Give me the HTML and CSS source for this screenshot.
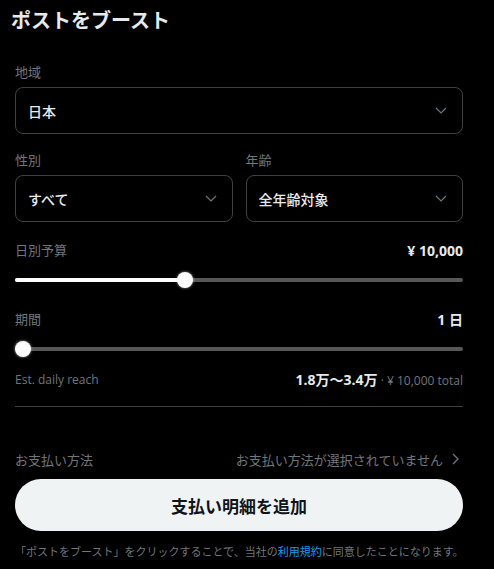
FILE: index.html
```html
<!DOCTYPE html>
<html lang="ja">
<head>
<meta charset="utf-8">
<link rel="stylesheet" href="styles.css">
</head>
<body>
<div class="page">
  <h1 class="title">ポストをブースト</h1>

  <div class="field">
    <div class="label">地域</div>
    <div class="select"><span>日本</span><svg class="chev" viewBox="0 0 12 7" width="12" height="7"><path d="M1 1l5 5 5-5" fill="none" stroke="#71767b" stroke-width="1.2"/></svg></div>
  </div>

  <div class="row">
    <div class="field">
      <div class="label">性別</div>
      <div class="select"><span>すべて</span><svg class="chev" viewBox="0 0 12 7" width="12" height="7"><path d="M1 1l5 5 5-5" fill="none" stroke="#71767b" stroke-width="1.2"/></svg></div>
    </div>
    <div class="field">
      <div class="label">年齢</div>
      <div class="select"><span>全年齢対象</span><svg class="chev" viewBox="0 0 12 7" width="12" height="7"><path d="M1 1l5 5 5-5" fill="none" stroke="#71767b" stroke-width="1.2"/></svg></div>
    </div>
  </div>

  <div class="head head-budget">
    <span class="label">日別予算</span>
    <span class="value">¥ 10,000</span>
  </div>
  <div class="slider">
    <div class="track"><div class="fill" style="width: 38%"></div></div>
    <div class="thumb thumb-mid" style="left: 38%"></div>
  </div>

  <div class="head head-period">
    <span class="label">期間</span>
    <span class="value">1 日</span>
  </div>
  <div class="slider">
    <div class="track"><div class="fill" style="width: 0%"></div></div>
    <div class="thumb" style="left: 0%"></div>
  </div>

  <div class="reach">
    <span class="reach-label">Est. daily reach</span>
    <span class="reach-value"><b>1.8万〜3.4万</b> · ¥ 10,000 total</span>
  </div>

  <div class="divider"></div>

  <div class="pay">
    <span>お支払い方法</span>
    <span class="pay-right">お支払い方法が選択されていません<svg viewBox="0 0 7 12" width="7" height="12"><path d="M1 1l5 5-5 5" fill="none" stroke="#71767b" stroke-width="1.3"/></svg></span>
  </div>

  <button class="btn">支払い明細を追加</button>

  <p class="terms">「ポストをブースト」をクリックすることで、当社の<a href="#">利用規約</a>に同意したことになります。</p>
</div>
</body>
</html>
```

FILE: styles.css
```css
* { box-sizing: border-box; }
html, body {
  margin: 0;
  padding: 0;
  background: #000;
}
body {
  font-family: "Open Sans", "Noto Sans CJK JP", sans-serif;
  color: #e7e9ea;
}
.page {
  width: 494px;
  height: 569px;
  padding: 0 31px 0 15px;
  overflow: hidden;
}
.title {
  margin: 0 0 22px -4px;
  height: 40px;
  line-height: 40px;
  font-size: 20px;
  font-weight: 700;
  font-family: "Noto Sans CJK JP", sans-serif;
  color: #e7e9ea;
}
.label {
  font-size: 13px;
  line-height: 20px;
  height: 20px;
  color: #71767b;
  font-family: "Noto Sans CJK JP", sans-serif;
}
.field .label { margin-bottom: 5px; }
.select {
  height: 47px;
  border: 1px solid #3e4144;
  border-radius: 8px;
  padding: 0 15px 0 12px;
  display: flex;
  align-items: center;
  justify-content: space-between;
  font-size: 14px;
  font-weight: 500;
  font-family: "Noto Sans CJK JP", sans-serif;
  color: #e7e9ea;
}
.chev { display: block; }
.row {
  margin-top: 16px;
  display: grid;
  grid-template-columns: 1fr 1fr;
  gap: 13px;
}
.row .field .label { margin-bottom: 5px; }
.head {
  display: flex;
  justify-content: space-between;
  align-items: center;
  height: 20px;
}
.head-budget { margin-top: 18px; }
.head-period { margin-top: 19px; }
.value {
  font-size: 14px;
  font-weight: 700;
  color: #e7e9ea;
}
.slider {
  position: relative;
  height: 20px;
  margin-top: 10px;
  display: flex;
  align-items: center;
}
.track {
  width: 100%;
  height: 4px;
  border-radius: 2px;
  background: #575757;
  overflow: hidden;
}
.fill {
  height: 100%;
  background: #fff;
}
.thumb {
  position: absolute;
  top: 2px;
  width: 16px;
  height: 16px;
  border-radius: 50%;
  background: #fff;
  box-shadow: 0 0 3px rgba(255,255,255,0.6);
}
.thumb-mid { margin-left: -8px; }
.reach {
  margin-top: 10px;
  height: 20px;
  display: flex;
  justify-content: space-between;
  align-items: center;
  font-size: 12px;
  color: #71767b;
}
.reach-value b {
  color: #e7e9ea;
  font-size: 14px;
  font-weight: 700;
}
.divider {
  margin-top: 17px;
  height: 1px;
  background: #3e4144;
}
.pay {
  margin-top: 42px;
  height: 20px;
  display: flex;
  justify-content: space-between;
  align-items: center;
  font-size: 13px;
  color: #71767b;
  font-family: "Noto Sans CJK JP", sans-serif;
}
.pay-right {
  display: flex;
  align-items: center;
  gap: 9px;
  margin-right: 4px;
}
.btn {
  display: block;
  width: 100%;
  margin-top: 10px;
  height: 52px;
  border: none;
  border-radius: 26px;
  background: #eff3f4;
  color: #0f1419;
  font-size: 17px;
  font-weight: 700;
  font-family: "Noto Sans CJK JP", sans-serif;
}
.terms {
  margin: 10px 0 0;
  height: 20px;
  line-height: 20px;
  font-size: 11px;
  color: #71767b;
  white-space: nowrap;
  font-family: "Noto Sans CJK JP", sans-serif;
}
.terms a {
  color: #1d9bf0;
  text-decoration: none;
}
```
